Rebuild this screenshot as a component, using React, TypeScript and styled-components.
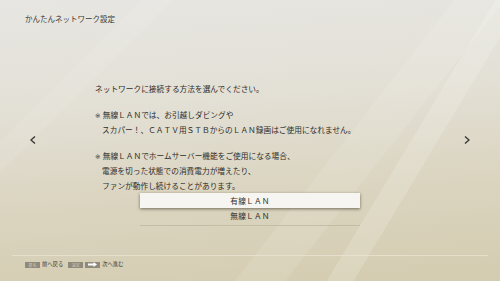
import styled, { createGlobalStyle } from "styled-components";

const GlobalStyle = createGlobalStyle`
  html, body {
    margin: 0;
    padding: 0;
    background: #d9d3bd;
  }
  body {
    font-family: "Noto Sans CJK JP", "Noto Sans", sans-serif;
  }
`;

type GuideLine = { text: string; note?: boolean; indent?: boolean };

const guideLines: GuideLine[][] = [
  [{ text: "ネットワークに接続する方法を選んでください。" }],
  [
    { text: "無線ＬＡＮでは、お引越しダビングや", note: true },
    { text: "スカパー！、ＣＡＴＶ用ＳＴＢからのＬＡＮ録画はご使用になれません。", indent: true },
  ],
  [
    { text: "無線ＬＡＮでホームサーバー機能をご使用になる場合、", note: true },
    { text: "電源を切った状態での消費電力が増えたり、", indent: true },
    { text: "ファンが動作し続けることがあります。", indent: true },
  ],
];

const options = [
  { label: "有線ＬＡＮ", selected: true },
  { label: "無線ＬＡＮ", selected: false },
];

function Chevron({ dir }: { dir: "left" | "right" }) {
  const points = dir === "left" ? "5,0.5 1,4 5,7.5" : "1,0.5 5,4 1,7.5";
  return (
    <ChevronBox>
      <svg width="6" height="8" viewBox="0 0 6 8">
        <polyline points={points} fill="none" stroke="#3a3a36" strokeWidth="1.4" />
      </svg>
    </ChevronBox>
  );
}

export default function App() {
  return (
    <>
      <GlobalStyle />
      <Screen>
        <Header>かんたんネットワーク設定</Header>
        <Main>
          <Chevron dir="left" />
          <Content>
            {guideLines.map((para, i) => (
              <Paragraph key={i} $last={i === guideLines.length - 1}>
                {para.map((line) => (
                  <Line key={line.text} $indent={line.indent}>
                    {line.note && <NoteMark>※</NoteMark>}
                    {line.text}
                  </Line>
                ))}
              </Paragraph>
            ))}
            <OptionList>
              {options.map((opt) => (
                <Option key={opt.label} $selected={opt.selected}>
                  {opt.label}
                </Option>
              ))}
            </OptionList>
          </Content>
          <Chevron dir="right" />
        </Main>
        <Footer>
          <Divider />
          <KeyRow>
            <KeyCap>戻る</KeyCap>
            <KeyLabel>前へ戻る</KeyLabel>
            <KeyCap $gap>決定</KeyCap>
            <KeyCap>
              <svg width="9" height="5" viewBox="0 0 9 5">
                <path d="M0 1.6 H5.5 V0 L9 2.5 L5.5 5 V3.4 H0 Z" fill="#ffffff" />
              </svg>
            </KeyCap>
            <KeyLabel>次へ進む</KeyLabel>
          </KeyRow>
        </Footer>
      </Screen>
    </>
  );
}

const Screen = styled.div`
  width: 500px;
  height: 281px;
  overflow: hidden;
  display: flex;
  flex-direction: column;
  color: #2e2d2a;
  background:
    linear-gradient(121deg, transparent 0 74%, rgba(255, 255, 250, 0.16) 74.2% 78%, transparent 78.2%),
    linear-gradient(128deg, transparent 0 63%, rgba(255, 255, 250, 0.1) 63.3% 70%, transparent 70.3%),
    linear-gradient(135deg, transparent 0 18%, rgba(255, 255, 255, 0.08) 18.3% 22%, transparent 22.3%),
    linear-gradient(176deg, #e7e6e2 0%, #e3e0d6 35%, #dbd5c1 65%, #d4ccb0 100%);
`;

const Header = styled.div`
  height: 38px;
  box-sizing: border-box;
  padding: 14px 0 0 25px;
  font-size: 7.5px;
  line-height: 10px;
  color: #3a3936;
`;

const Main = styled.div`
  flex: 1;
  display: flex;
  align-items: flex-start;
  padding: 0 28px;
`;

const ChevronBox = styled.div`
  width: 10px;
  display: flex;
  justify-content: center;
  margin-top: 98px;
`;

const Content = styled.div`
  flex: 1;
  padding: 43px 0 0 57px;
`;

const Paragraph = styled.div<{ $last?: boolean }>`
  margin-bottom: ${(p) => (p.$last ? "0" : "11px")};
`;

const Line = styled.div<{ $indent?: boolean }>`
  height: 15px;
  font-size: 7.7px;
  line-height: 15px;
  white-space: nowrap;
  padding-left: ${(p) => (p.$indent ? "7px" : "0")};
`;

const NoteMark = styled.span`
  display: inline-block;
  width: 7.7px;
  line-height: 1;
  font-family: "DejaVu Sans", "Liberation Sans", sans-serif;
  font-size: 6.5px;
  color: #2e2d2a;
`;

const OptionList = styled.div`
  width: 220px;
  margin-left: 45px;
  border-bottom: 1px solid rgba(180, 172, 145, 0.55);
  padding-bottom: 2px;
`;

const Option = styled.div<{ $selected: boolean }>`
  height: 15px;
  display: flex;
  align-items: center;
  justify-content: center;
  font-size: 7.7px;
  letter-spacing: 0.2px;
  background: ${(p) => (p.$selected ? "#f6f5f1" : "transparent")};
  box-shadow: ${(p) => (p.$selected ? "0 1px 3px rgba(40, 35, 20, 0.6)" : "none")};
`;

const Footer = styled.div`
  height: 39px;
  box-sizing: border-box;
  padding: 13px 12px 0;
`;

const Divider = styled.div`
  height: 1px;
  background: rgba(235, 230, 212, 0.7);
`;

const KeyRow = styled.div`
  display: flex;
  align-items: center;
  gap: 2px;
  margin: 5px 0 0 13px;
`;

const KeyCap = styled.span<{ $gap?: boolean }>`
  width: 15px;
  height: 6px;
  display: inline-flex;
  align-items: center;
  justify-content: center;
  background: #8f8a7b;
  color: #d8d4c6;
  font-size: 4px;
  line-height: 6px;
  margin-left: ${(p) => (p.$gap ? "3px" : "0")};
`;

const KeyLabel = styled.span`
  font-size: 5.3px;
  line-height: 7px;
  color: #3a3936;
`;
